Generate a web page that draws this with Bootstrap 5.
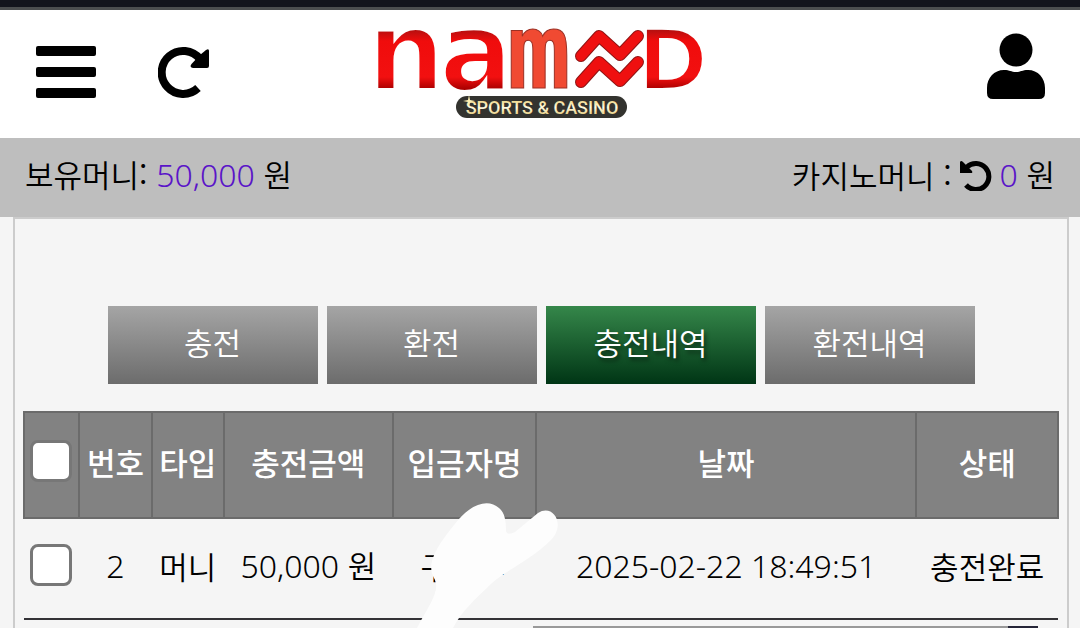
<!DOCTYPE html>
<html lang="ko">
<head>
<meta charset="utf-8">
<meta name="viewport" content="width=device-width, initial-scale=1">
<title>충전내역</title>
<link href="https://cdn.jsdelivr.net/npm/bootstrap@5.3.0/dist/css/bootstrap.min.css" rel="stylesheet">
<style>
  body { background: #f5f5f5; color: #000; font-family: "Noto Sans CJK KR", sans-serif; font-size: 31px; font-weight: 350; line-height: 40px; }
  .top-strip { height: 10px; background: #12141d; border-bottom: 3px solid #4b4e50; }
  .site-header { height: 128px; padding: 0 35px 4px; }
  .side { flex: 1 1 0; gap: 62px; }
  .icon-btn { line-height: 0; color: #000; }
  .brand { overflow: visible; }
  .money-bar { height: 79px; padding: 0 25px 6px 25px; background: #bebebe; }
  .amount { color: #5a14c8; }
  .panel { margin: 0 11px 0 13px; border: solid #ccc; border-width: 2px 2px 0; padding: 87px 8px 0; }
  .tabs { gap: 9px; margin-bottom: 27px; }
  .tab { flex: 0 1 210px; height: 78px; padding: 0 0 6px; color: #fff; text-decoration: none; background: linear-gradient(#a5a5a5, #6c6c6c); }
  .tab.active { background: linear-gradient(#35874a, #003515); text-shadow: 2px 3px 4px #0008; }
  .history { table-layout: fixed; border-collapse: collapse; }
  .history th { height: 106px; border: 2px solid #6b6b6b; background: #828282; color: #fff; font-weight: 500; padding: 0; }
  .history td { height: 101px; border-bottom: 2px solid #333236; padding: 0; white-space: nowrap; }
  .history td:nth-child(n+2), .history th:nth-child(n+2) { padding-bottom: 6px; }
  .history .form-check-input { display: block; width: 42px; height: 42px; margin: 0 auto 8px; border: 3px solid #777; border-radius: 8px; background: #fff; }
  .digits { font-family: "Noto Sans", sans-serif; font-size: 32px; font-weight: 300; }
  .scribble { left: 394px; top: 90px; }
  .next-strip { height: 2px; margin: 6px 21px 0 510px; background: linear-gradient(90deg, #999 0 94%, #262638 94%); }
</style>
</head>
<body class="min-vh-100 d-flex flex-column">
<div class="top-strip"></div>
<header class="site-header bg-white d-flex align-items-center">
  <div class="side d-flex align-items-center">
    <button type="button" class="btn p-0 border-0 icon-btn" aria-label="메뉴">
      <svg width="61" height="54" viewBox="0 0 61 54"><g fill="#000"><rect x="1" y="1" width="60" height="10" rx="2"/><rect x="1" y="22" width="60" height="10" rx="2"/><rect x="1" y="43" width="60" height="10" rx="2"/></g></svg>
    </button>
    <button type="button" class="btn p-0 border-0 icon-btn" aria-label="새로고침">
      <svg width="52" height="52" viewBox="0 0 52 52"><path d="M40 42A21.500 21.500 0 1 1 42 13" fill="none" stroke="#000" stroke-width="8"/><path d="M42 9 48 4Q51 2 51 5V20Q51 22 49 22H35Q31 21 33.500 18Z"/></svg>
    </button>
  </div>
  <a href="#" aria-label="NAMWD SPORTS &amp; CASINO" class="icon-btn">
    <svg class="brand" width="332" height="90" viewBox="0 0 332 90">
      <defs>
        <linearGradient id="red" x1="0" y1="2" x2="0" y2="62" gradientUnits="userSpaceOnUse"><stop offset="0" stop-color="#b01010"/><stop offset=".2" stop-color="#f00c0c"/><stop offset=".8" stop-color="#f21010"/><stop offset="1" stop-color="#a00"/></linearGradient>
        <linearGradient id="gold" x1="0" y1="0" x2="0" y2="1"><stop offset="0" stop-color="#e8c65c"/><stop offset=".5" stop-color="#fffbe0"/><stop offset="1" stop-color="#dcb955"/></linearGradient>
      </defs>
      <g fill="url(#red)" stroke="#fff" stroke-width="4" font-family="DejaVu Sans" font-weight="700">
        <text x="-7" y="63" font-size="110">n</text>
        <text x="65" y="63" font-size="110">a</text>
        <text x="133" y="61" font-family="DejaVu Sans Mono" font-size="106" fill="#f04a32" stroke="#9c3024" stroke-width="1">m</text>
        <text x="263" y="63" font-size="86">D</text>
      </g>
      <g fill="none" stroke-linecap="round" stroke-linejoin="round">
        <path d="M207 29 225 9 246 28 264 9M207 55 225 35 246 54 264 35" stroke="#8e1414" stroke-width="12"/>
        <path d="M207 29 225 9 246 28 264 9M207 55 225 35 246 54 264 35" stroke="#ef1010" stroke-width="10"/>
      </g>
      <rect x="82" y="69" width="171" height="22" rx="11" fill="#33332f"/>
      <text x="168" y="87" text-anchor="middle" font-family="Roboto" font-weight="500" font-size="18" fill="url(#gold)">SPORTS &amp; CASINO</text>
      <path d="M95 68 96 73 101 74 96 75 95 80 94 75 89 74 94 73Z" fill="#fff3b5"/>
    </svg>
  </a>
  <div class="side d-flex justify-content-end">
    <button type="button" class="btn p-0 border-0 icon-btn" aria-label="내 정보">
      <svg width="58" height="78" viewBox="0 0 58 78"><circle cx="29" cy="17" r="16.500"/><path d="M17 37C23 37 24 39 29 39S35 37 41 37C51 37 58 45 58 55V60Q58 66 52 66H6Q0 66 0 60V55C0 45 7 37 17 37Z"/></svg>
    </button>
  </div>
</header>
<div class="money-bar d-flex justify-content-between align-items-center">
  <div>보유머니: <span class="digits amount">50,000</span> 원</div>
  <div class="d-flex align-items-center gap-2"><span>카지노머니 :</span>
    <button type="button" class="btn p-0 border-0 icon-btn" aria-label="카지노머니 새로고침"><svg width="32" height="32" viewBox="0 0 32 32"><path d="M6 26A13 13 0 1 0 7 8" fill="none" stroke="#000" stroke-width="5"/><path d="M0 3Q1 1 3 3L12 12Q13 14 11 14H0Z"/></svg></button>
    <span><span class="digits amount">0</span> 원</span></div>
</div>
<main class="panel flex-grow-1">
  <nav class="tabs d-flex justify-content-center">
    <a href="#" class="tab d-flex align-items-center justify-content-center">충전</a>
    <a href="#" class="tab d-flex align-items-center justify-content-center">환전</a>
    <a href="#" class="tab active d-flex align-items-center justify-content-center" aria-current="page">충전내역</a>
    <a href="#" class="tab d-flex align-items-center justify-content-center">환전내역</a>
  </nav>
  <div class="position-relative">
    <table class="history w-100 text-center align-middle">
      <colgroup><col style="width:5.3%"><col style="width:7.1%"><col style="width:6.9%"><col style="width:16.4%"><col style="width:13.8%"><col style="width:36.8%"><col style="width:13.7%"></colgroup>
      <thead><tr>
        <th><input class="form-check-input" type="checkbox" aria-label="전체 선택"></th>
        <th>번호</th><th>타입</th><th>충전금액</th><th>입금자명</th><th>날짜</th><th>상태</th>
      </tr></thead>
      <tbody><tr>
        <td><input class="form-check-input" type="checkbox" aria-label="2번 선택"></td>
        <td class="digits">2</td><td>머니</td><td><span class="digits">50,000</span> 원</td><td>구&emsp;ㄴ</td><td class="digits">2025-02-22 18:49:51</td><td>충전완료</td>
      </tr></tbody>
    </table>
    <svg class="scribble position-absolute" width="142" height="127" viewBox="0 0 142 127" aria-hidden="true"><path fill="#fdfdfd" d="M17 77C8 62 22 42 42 18C56 2 72-2 82 7C88 12 89 20 89 30Q90 35 98 31L121 12C136 2 150 24 133 40C116 57 90 69 75 82C57 99 44 111 36 127H0C13 103 24 89 17 77Z"/></svg>
  </div>
  <div class="next-strip"></div>
</main>
<script src="https://cdn.jsdelivr.net/npm/bootstrap@5.3.0/dist/js/bootstrap.bundle.min.js"></script>
</body>
</html>
